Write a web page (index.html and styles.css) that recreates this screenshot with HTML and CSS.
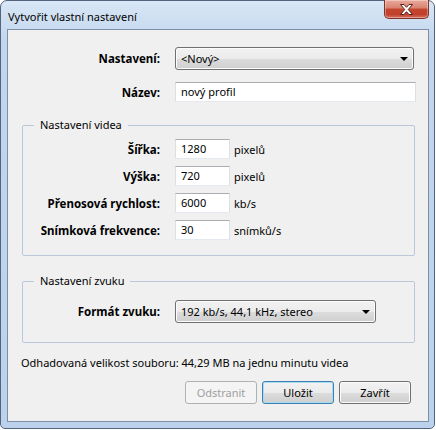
FILE: index.html
```html
<!DOCTYPE html>
<html lang="cs">
<head>
	<meta charset="UTF-8">
	<title>Vytvořit vlastní nastavení</title>
	<link rel="stylesheet" href="styles.css">
</head>
<body>
	<div class="window">
		<div class="titlebar">
			<span class="title">Vytvořit vlastní nastavení</span>
			<div class="close">
				<svg width="17" height="11" viewBox="0 0 17 11"><path d="M2.5 0.5h3.5l2.5 2.8 2.5-2.8h3.5l-4.2 5 4.2 5h-3.5l-2.5-2.8-2.5 2.8h-3.5l4.2-5z" fill="#fff" stroke="#5a2118" stroke-width="1"/></svg>
			</div>
		</div>
		<div class="client">
			<div class="row first">
				<label class="lbl">Nastavení:</label>
				<div class="combo combo-wide"><span>&lt;Nový&gt;</span><i class="arrow"></i></div>
			</div>
			<div class="row">
				<label class="lbl">Název:</label>
				<div class="edit edit-wide">nový profil</div>
			</div>

			<fieldset class="grp grp-video">
				<legend>Nastavení videa</legend>
				<div class="row">
					<label class="lbl">Šířka:</label>
					<div class="edit edit-num">1280</div>
					<span class="unit">pixelů</span>
				</div>
				<div class="row">
					<label class="lbl">Výška:</label>
					<div class="edit edit-num">720</div>
					<span class="unit">pixelů</span>
				</div>
				<div class="row">
					<label class="lbl">Přenosová rychlost:</label>
					<div class="edit edit-num">6000</div>
					<span class="unit">kb/s</span>
				</div>
				<div class="row">
					<label class="lbl">Snímková frekvence:</label>
					<div class="edit edit-num">30</div>
					<span class="unit">snímků/s</span>
				</div>
			</fieldset>

			<fieldset class="grp grp-audio">
				<legend>Nastavení zvuku</legend>
				<div class="row">
					<label class="lbl">Formát zvuku:</label>
					<div class="combo combo-audio"><span>192 kb/s, 44,1 kHz, stereo</span><i class="arrow"></i></div>
				</div>
			</fieldset>

			<p class="estimate">Odhadovaná velikost souboru: 44,29 MB na jednu minutu videa</p>

			<div class="buttons">
				<button class="btn" disabled>Odstranit</button>
				<button class="btn btn-default">Uložit</button>
				<button class="btn">Zavřít</button>
			</div>
		</div>
	</div>
</body>
</html>
```

FILE: styles.css
```css
html, body { margin: 0; background: #fff; }
body { font-family: "Noto Sans", "Open Sans", sans-serif; font-size: 11px; color: #000; }

/* window frame */
.window { box-sizing: border-box; width: 435px; height: 429px; border: 1px solid #53657c; border-radius: 7px 7px 5px 5px; background: linear-gradient(#d9e7f6, #c2d6ee 40px, #bcd2ec); padding: 0 5px 6px 6px; display: flex; flex-direction: column; }
.titlebar { height: 28px; display: flex; align-items: flex-start; justify-content: space-between; }
.title { padding: 8px 0 0 1px; line-height: 15px; }
.close { width: 45px; height: 19px; box-sizing: border-box; margin-top: -1px; border: 1px solid #7d3328; border-top: none; border-radius: 0 0 5px 5px; background: linear-gradient(#e9a99b, #d88270 45%, #c4452e 50%, #c0402c 80%, #d6735e); display: flex; align-items: center; justify-content: center; box-shadow: inset 0 0 0 1px rgba(255,255,255,0.35); }

.client { flex: 1; border: 1px solid #7d8fa6; background: #f0f0f0; padding: 17px 0 0 0; }

/* form rows */
.row { display: flex; align-items: center; gap: 15px; }
.row + .row { margin-top: 12px; }
.lbl { width: 152px; flex: none; text-align: right; font-weight: bold; font-size: 11.5px; }
.unit { margin-left: -11px; }

.edit { box-sizing: border-box; height: 20px; background: #fff; border: 1px solid #abadb3; border-color: #abadb3 #dbdfe6 #e3e9ef #dbdfe6; padding: 0 5px; line-height: 18px; }
.edit-wide { width: 241px; }
.edit-num { width: 55px; }

.combo { box-sizing: border-box; height: 23px; border: 1px solid #707070; border-radius: 3px; background: linear-gradient(#f2f2f2, #ebebeb 50%, #dddddd 50%, #cfcfcf); box-shadow: inset 0 0 0 1px #fcfcfc; display: flex; align-items: center; justify-content: space-between; padding: 0 5px 0 5px; }
.combo-wide { width: 239px; }
.combo-audio { width: 201px; }
.arrow { width: 0; height: 0; border-left: 4px solid transparent; border-right: 4px solid transparent; border-top: 4px solid #000; }

/* group boxes */
.grp { margin: 0 13px 0 14px; border: 1px solid #bac8d9; border-radius: 2px; padding: 0; }
.grp legend { margin-left: 11px; padding: 0 6px; line-height: 16px; }
.grp .lbl { width: 137px; }
.grp .row + .row { margin-top: 7px; }
.grp-video { margin-top: 15px; padding: 6px 0 15px; }
.grp-audio { margin-top: 17px; padding: 11px 0 19px; }

.estimate { margin: 12px 0 0 13px; line-height: 16px; }

/* dialog buttons */
.buttons { display: flex; justify-content: flex-end; gap: 5px; margin: 10px 17px 0 0; }
.btn { box-sizing: border-box; width: 72px; height: 23px; font: inherit; color: #000; border: 1px solid #707070; border-radius: 3px; background: linear-gradient(#f2f2f2, #ebebeb 50%, #dddddd 50%, #cfcfcf); box-shadow: inset 0 0 0 1px #fcfcfc; padding: 0; }
.btn:disabled { color: #a0a0a0; border-color: #adb2b5; background: #f4f4f4; box-shadow: none; }
.btn-default { border-color: #3c7fb1; box-shadow: inset 0 0 0 1px #a9dcf1; }
```
